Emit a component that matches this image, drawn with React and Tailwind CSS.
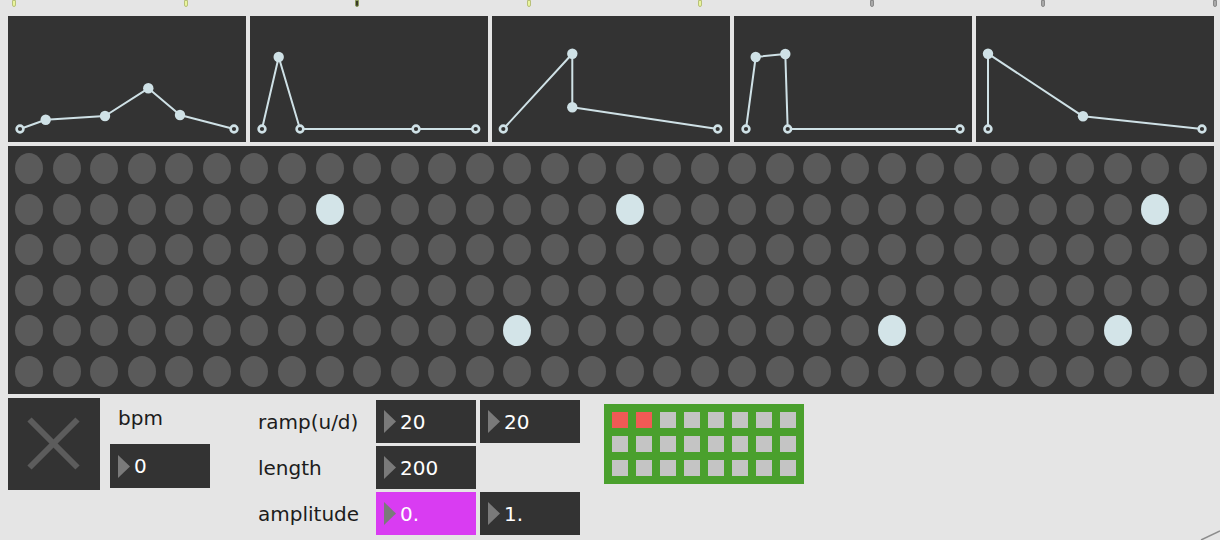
import React from 'react'

const FONT = { fontFamily: '"DejaVu Sans", sans-serif' }

// envelope breakpoints, panel-local coords (238 x 126)
const ENVELOPES = [
  [[12, 113], [37.7, 103.7], [97, 100], [140.3, 72.3], [172, 99], [226, 113]],
  [[12, 113], [28.7, 41], [50, 113], [166, 113], [225.7, 113]],
  [[11.3, 113], [80.3, 37.7], [80.3, 91.3], [225.7, 113]],
  [[12, 113], [21.7, 41], [51.3, 38], [53.7, 113], [226, 113]],
  [[12, 113], [12, 37.7], [107, 100.3], [226, 113]],
]

const LIT = { '1-8': 1, '1-16': 1, '1-30': 1, '4-13': 1, '4-23': 1, '4-29': 1 }

const THUMBS = ['lime', 'lime', 'dark', 'lime', 'lime', 'gray', 'gray', 'gray']

function Envelope({ pts }) {
  const line = pts.map(p => p.join(',')).join(' ')
  return (
    <div className="w-[238px] h-[126px] bg-[#333333]">
      <svg width="238" height="126" viewBox="0 0 238 126">
        <polyline points={line} fill="none" stroke="#cfe1e6" strokeWidth="2" strokeLinejoin="round" />
        {pts.map(([x, y], i) =>
          y >= 112 ? (
            <circle key={i} cx={x} cy={y} r="3.4" fill="#333333" stroke="#cfe1e6" strokeWidth="2.6" />
          ) : (
            <circle key={i} cx={x} cy={y} r="5.2" fill="#cfe1e6" />
          )
        )}
      </svg>
    </div>
  )
}

function Arrow() {
  return (
    <svg width="12" height="23" viewBox="0 0 12 23" className="ml-[8px] shrink-0">
      <polygon points="0,0 12,11.5 0,23" fill="#7a7a7a" />
    </svg>
  )
}

function NumBox({ value, magenta }) {
  return (
    <div className={`w-[100px] h-[43px] flex items-center ${magenta ? 'bg-[#d93cf2]' : 'bg-[#333333]'}`}>
      <Arrow />
      <span className="ml-[4px] text-[20px] text-white leading-none">{value}</span>
    </div>
  )
}

export default function App() {
  return (
    <div className="w-[1220px] h-[540px] bg-[#e5e5e5] relative overflow-hidden" style={FONT}>
      {/* slider thumbs cut off at the top */}
      <div className="h-[16px] flex justify-between items-start pl-[12px] pr-[3px]">
        {THUMBS.map((t, i) => (
          <div
            key={i}
            className={`w-[4px] h-[7px] rounded-b-full border ${
              t === 'lime' ? 'bg-[#e9f59c] border-[#b8c07a]' : t === 'dark' ? 'bg-[#3a3a2a] border-[#8a9a5a]' : 'bg-[#a8a8a8] border-[#8a8a8a]'
            }`}
          />
        ))}
      </div>

      {/* envelopes */}
      <div className="flex gap-[4px] pl-[8px]">
        {ENVELOPES.map((pts, i) => <Envelope key={i} pts={pts} />)}
      </div>

      {/* step matrix */}
      <div className="ml-[8px] mt-[4px] w-[1206px] h-[248px] bg-[#333333] px-[2.5px] py-[2.5px] grid grid-cols-[repeat(32,1fr)] grid-rows-6">
        {Array.from({ length: 6 }).map((_, r) =>
          Array.from({ length: 32 }).map((_, c) => (
            <div key={`${r}-${c}`} className="flex items-center justify-center">
              <div className={`w-[28px] h-[31px] rounded-[50%] ${LIT[`${r}-${c}`] ? 'bg-[#d3e4e8]' : 'bg-[#5a5a5a]'}`} />
            </div>
          ))
        )}
      </div>

      {/* controls */}
      <div className="flex items-start mt-[4px]">
        <div className="ml-[8px] w-[92px] h-[92px] bg-[#333333]">
          <svg width="92" height="92" viewBox="0 0 92 92">
            <line x1="21.5" y1="21.5" x2="69.5" y2="69.5" stroke="#5c5c5c" strokeWidth="6" />
            <line x1="69.5" y1="21.5" x2="21.5" y2="69.5" stroke="#5c5c5c" strokeWidth="6" />
          </svg>
        </div>

        <div className="ml-[10px] w-[100px] flex flex-col">
          <div className="h-[46px] flex items-center pl-[8px] pb-[6px] text-[20px] text-[#1c1c1c]">bpm</div>
          <div className="h-[44px] w-[100px] bg-[#333333] flex items-center">
            <Arrow />
            <span className="ml-[4px] text-[20px] text-white leading-none">0</span>
          </div>
        </div>

        <div className="ml-[48px] mt-[2px] w-[118px] flex flex-col gap-[3px] text-[20px] text-[#1c1c1c]">
          <div className="h-[43px] flex items-center">ramp(u/d)</div>
          <div className="h-[43px] flex items-center">length</div>
          <div className="h-[43px] flex items-center">amplitude</div>
        </div>

        <div className="mt-[2px] grid grid-cols-[100px_100px] gap-x-[4px] gap-y-[3px]">
          <NumBox value="20" />
          <NumBox value="20" />
          <NumBox value="200" />
          <div />
          <NumBox value="0." magenta />
          <NumBox value="1." />
        </div>

        <div className="ml-[24px] mt-[6px] w-[200px] h-[80px] bg-[#4aa02d] p-[8px] grid grid-cols-8 gap-[8px]">
          {Array.from({ length: 24 }).map((_, i) => (
            <div key={i} className={`w-[16px] h-[16px] ${i < 2 ? 'bg-[#f15a55]' : 'bg-[#c4c4c4]'}`} />
          ))}
        </div>
      </div>

      {/* resize grip */}
      <svg width="20" height="12" viewBox="0 0 20 12" className="absolute right-0 bottom-0">
        <line x1="1" y1="12" x2="20" y2="3" stroke="#8c8c8c" strokeWidth="1.5" />
      </svg>
    </div>
  )
}
